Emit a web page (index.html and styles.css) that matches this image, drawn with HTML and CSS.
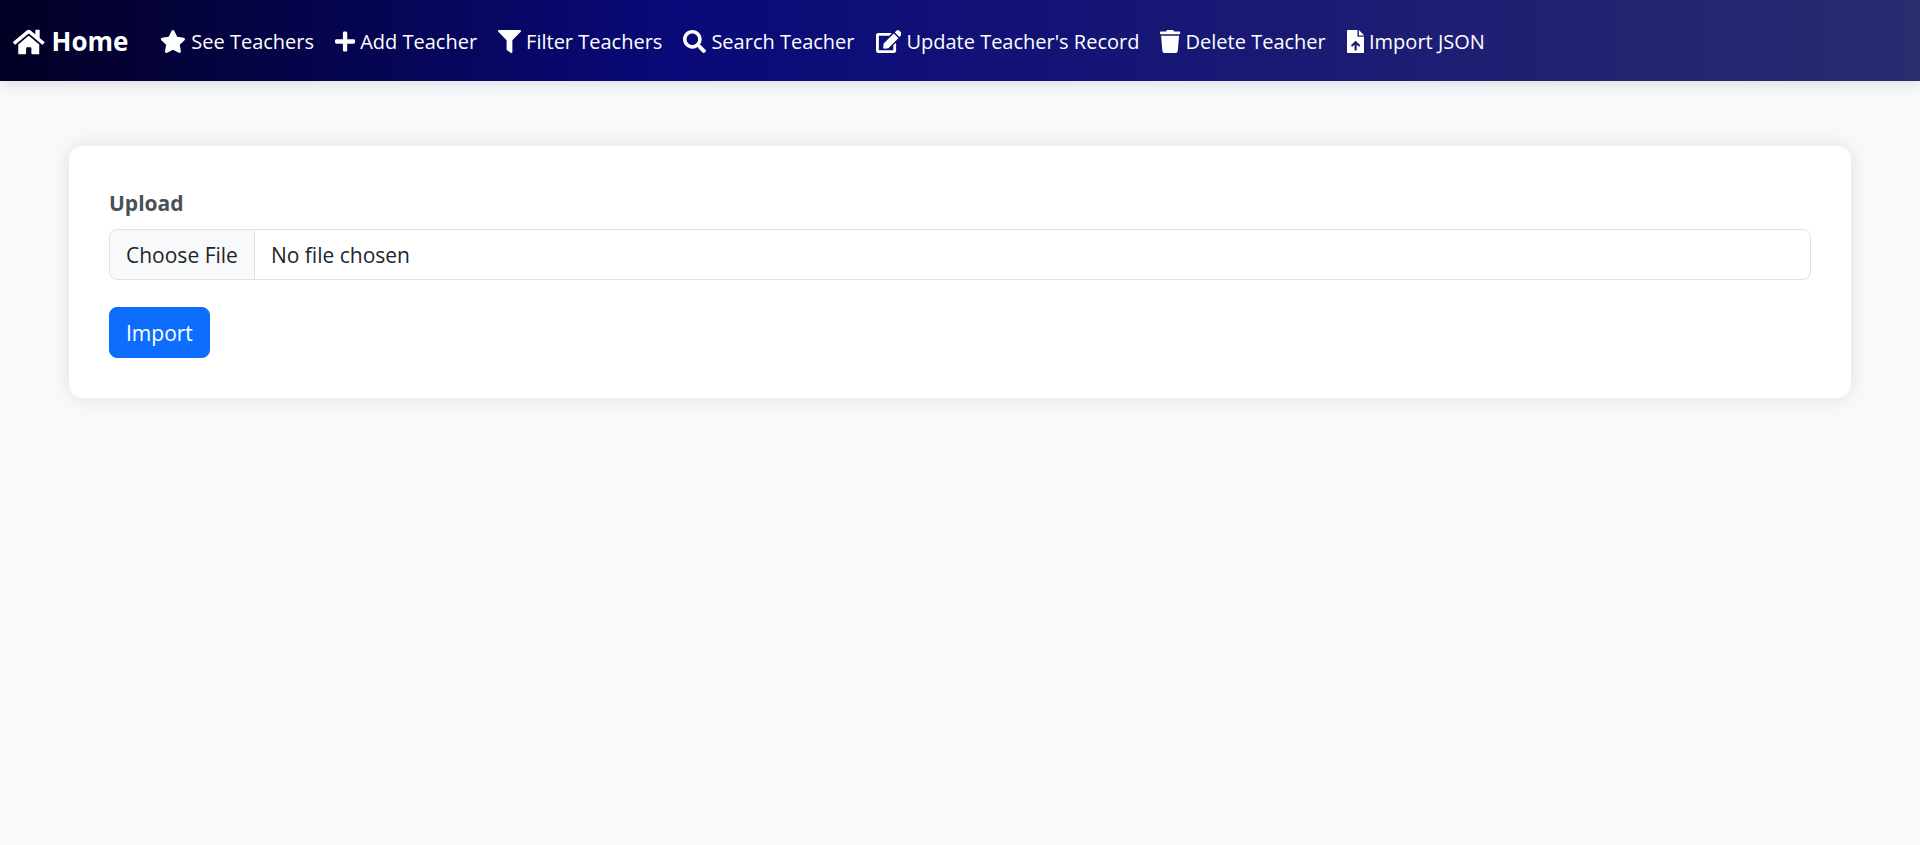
FILE: index.html
```html
<!DOCTYPE html>
<html lang="en">
<head>
<meta charset="utf-8">
<meta name="viewport" content="width=device-width, initial-scale=1">
<title>Import JSON</title>
<link rel="stylesheet" href="styles.css">
</head>
<body>
<nav class="navbar">
  <a class="brand" href="#"><svg class="icon" viewBox="0 0 576 512" aria-hidden="true"><path d="M280.37 148.26L96 300.11V464a16 16 0 0 0 16 16l112.06-.29a16 16 0 0 0 15.92-16V368a16 16 0 0 1 16-16h64a16 16 0 0 1 16 16v95.64a16 16 0 0 0 16 16.05L464 480a16 16 0 0 0 16-16V300L295.67 148.26a12.19 12.19 0 0 0-15.3 0zM571.6 251.47L488 182.56V44.05a12 12 0 0 0-12-12h-56a12 12 0 0 0-12 12v72.61L318.47 43a48 48 0 0 0-61 0L4.34 251.47a12 12 0 0 0-1.6 16.9l25.5 31A12 12 0 0 0 45.15 301l235.22-193.74a12.19 12.19 0 0 1 15.3 0L530.9 301a12 12 0 0 0 16.9-1.6l25.5-31a12 12 0 0 0-1.7-16.93z"/></svg>Home</a>
  <ul class="nav-list">
    <li><a class="nav-link" href="#"><svg class="icon" viewBox="0 0 576 512" aria-hidden="true"><path d="M259.3 17.8L194 150.2 47.9 171.5c-26.2 3.8-36.7 36.1-17.7 54.6l105.7 103-25 145.5c-4.5 26.3 23.2 46 46.4 33.7L288 439.6l130.7 68.7c23.2 12.2 50.9-7.4 46.4-33.7l-25-145.5 105.7-103c19-18.5 8.5-50.8-17.7-54.6L382 150.2 316.7 17.8c-11.7-23.6-45.6-23.9-57.4 0z"/></svg>See Teachers</a></li>
    <li><a class="nav-link" href="#"><svg class="icon" viewBox="0 0 448 512" aria-hidden="true"><path d="M416 208H272V64c0-17.67-14.33-32-32-32h-32c-17.67 0-32 14.33-32 32v144H32c-17.67 0-32 14.33-32 32v32c0 17.67 14.33 32 32 32h144v144c0 17.67 14.33 32 32 32h32c17.67 0 32-14.33 32-32V304h144c17.67 0 32-14.33 32-32v-32c0-17.67-14.33-32-32-32z"/></svg>Add Teacher</a></li>
    <li><a class="nav-link" href="#"><svg class="icon" viewBox="0 0 512 512" aria-hidden="true"><path d="M487.976 0H24.028C2.71 0-8.047 25.866 7.058 40.971L192 225.941V432c0 7.831 3.821 15.17 10.237 19.662l80 55.98C298.02 518.69 320 507.493 320 487.98V225.941l184.947-184.97C520.021 25.896 509.338 0 487.976 0z"/></svg>Filter Teachers</a></li>
    <li><a class="nav-link" href="#"><svg class="icon" viewBox="0 0 512 512" aria-hidden="true"><path d="M505 442.7L405.3 343c-4.5-4.5-10.6-7-17-7H372c27.6-35.3 44-79.7 44-128C416 93.1 322.9 0 208 0S0 93.1 0 208s93.1 208 208 208c48.3 0 92.7-16.4 128-44v16.3c0 6.4 2.5 12.5 7 17l99.7 99.7c9.4 9.4 24.6 9.4 33.9 0l28.3-28.3c9.4-9.4 9.4-24.6.1-34zM208 336c-70.7 0-128-57.2-128-128 0-70.7 57.2-128 128-128 70.7 0 128 57.2 128 128 0 70.7-57.2 128-128 128z"/></svg>Search Teacher</a></li>
    <li><a class="nav-link" href="#"><svg class="icon" viewBox="0 0 576 512" aria-hidden="true"><path d="M402.6 83.2l90.2 90.2c3.8 3.8 3.8 10 0 13.8L274.4 405.6l-92.8 10.3c-12.4 1.4-22.9-9.1-21.5-21.5l10.3-92.8L388.8 83.2c3.8-3.8 10-3.8 13.8 0zm162-22.9l-48.8-48.8c-15.2-15.2-39.9-15.2-55.2 0l-35.4 35.4c-3.8 3.8-3.8 10 0 13.8l90.2 90.2c3.8 3.8 10 3.8 13.8 0l35.4-35.4c15.2-15.3 15.2-40 0-55.2zM384 346.2V448H64V128h229.8c3.2 0 6.2-1.3 8.5-3.5l40-40c7.6-7.6 2.2-20.5-8.5-20.5H48C21.5 64 0 85.5 0 112v352c0 26.5 21.5 48 48 48h352c26.5 0 48-21.5 48-48V306.2c0-10.7-12.9-16-20.5-8.5l-40 40c-2.2 2.3-3.5 5.3-3.5 8.5z"/></svg>Update Teacher's Record</a></li>
    <li><a class="nav-link" href="#"><svg class="icon" viewBox="0 0 448 512" aria-hidden="true"><path d="M432 32H312l-9.4-18.7A24 24 0 0 0 281.1 0H166.8a23.72 23.72 0 0 0-21.4 13.3L136 32H16A16 16 0 0 0 0 48v32a16 16 0 0 0 16 16h416a16 16 0 0 0 16-16V48a16 16 0 0 0-16-16zM24 128l29.2 339a48 48 0 0 0 47.9 45h245.8a48 48 0 0 0 47.9-45L424 128z"/></svg>Delete Teacher</a></li>
    <li><a class="nav-link" href="#"><svg class="icon" viewBox="0 0 384 512" aria-hidden="true"><path fill-rule="evenodd" d="M232 0v152h152v344c0 9-7 16-16 16H16c-9 0-16-7-16-16V16C0 7 7 0 16 0zM192 238L86 342l30 32 52-44v126h48V330l52 44 30-32zM264 0l120 120H264z"/></svg>Import JSON</a></li>
  </ul>
</nav>
<main class="page">
  <form class="card">
    <label class="field-label" for="upload">Upload</label>
    <input class="file-input" type="file" id="upload">
    <button class="submit" type="submit">Import</button>
  </form>
</main>
</body>
</html>
```

FILE: styles.css
```css
*,
*::before,
*::after {
  box-sizing: border-box;
}

body {
  margin: 0;
  background: #f8f9fb;
  color: #212529;
  font-family: "Segoe UI", "Open Sans", "Noto Sans", sans-serif;
  font-size: 21px;
  line-height: 33px;
}

.navbar {
  display: flex;
  align-items: center;
  gap: 22px;
  min-height: 81px;
  padding: 12px 13px 10px;
  background: linear-gradient(90deg, #020024 0%, #090979 35%, #2b2b70 100%);
  box-shadow: 0 4px 12px rgba(0, 0, 0, 0.1);
}

.brand,
.nav-link {
  display: flex;
  align-items: center;
  color: #fff;
  text-decoration: none;
  white-space: nowrap;
}

.brand {
  gap: 7px;
  font-size: 26px;
  font-weight: 700;
}

.nav-list {
  display: flex;
  flex-wrap: wrap;
  column-gap: 1px;
  margin: 0;
  padding: 0;
  list-style: none;
  font-size: 20px;
}

.nav-link {
  gap: 5px;
  padding: 11px 10px;
}

.icon {
  height: 23px;
  fill: currentColor;
}

.brand .icon {
  height: 28px;
}

.page {
  padding: 65px 69px;
}

.card {
  padding: 41px 40px 40px;
  border-radius: 14px;
  background: #fff;
  box-shadow: 0 0 20px rgba(0, 0, 0, 0.1);
}

.field-label {
  display: block;
  margin-bottom: 9px;
  color: #495057;
  font-weight: 700;
}

.file-input {
  display: block;
  width: 100%;
  height: 51px;
  margin-bottom: 27px;
  padding: 9px 16px 7px;
  overflow: hidden;
  border: 1px solid #dee2e6;
  border-radius: 8px;
  background: #fff;
  color: #212529;
  font: inherit;
}

.file-input::file-selector-button {
  margin: -9px 16px -7px -16px;
  padding: 9px 16px 7px;
  border: 0 solid #dee2e6;
  border-right-width: 1px;
  background: #f8f9fa;
  color: #212529;
  font: inherit;
}

.submit {
  padding: 9px 16px 7px;
  border: 1px solid #0d6efd;
  border-radius: 8px;
  background: #0d6efd;
  color: #fff;
  font: inherit;
  cursor: pointer;
}
```
